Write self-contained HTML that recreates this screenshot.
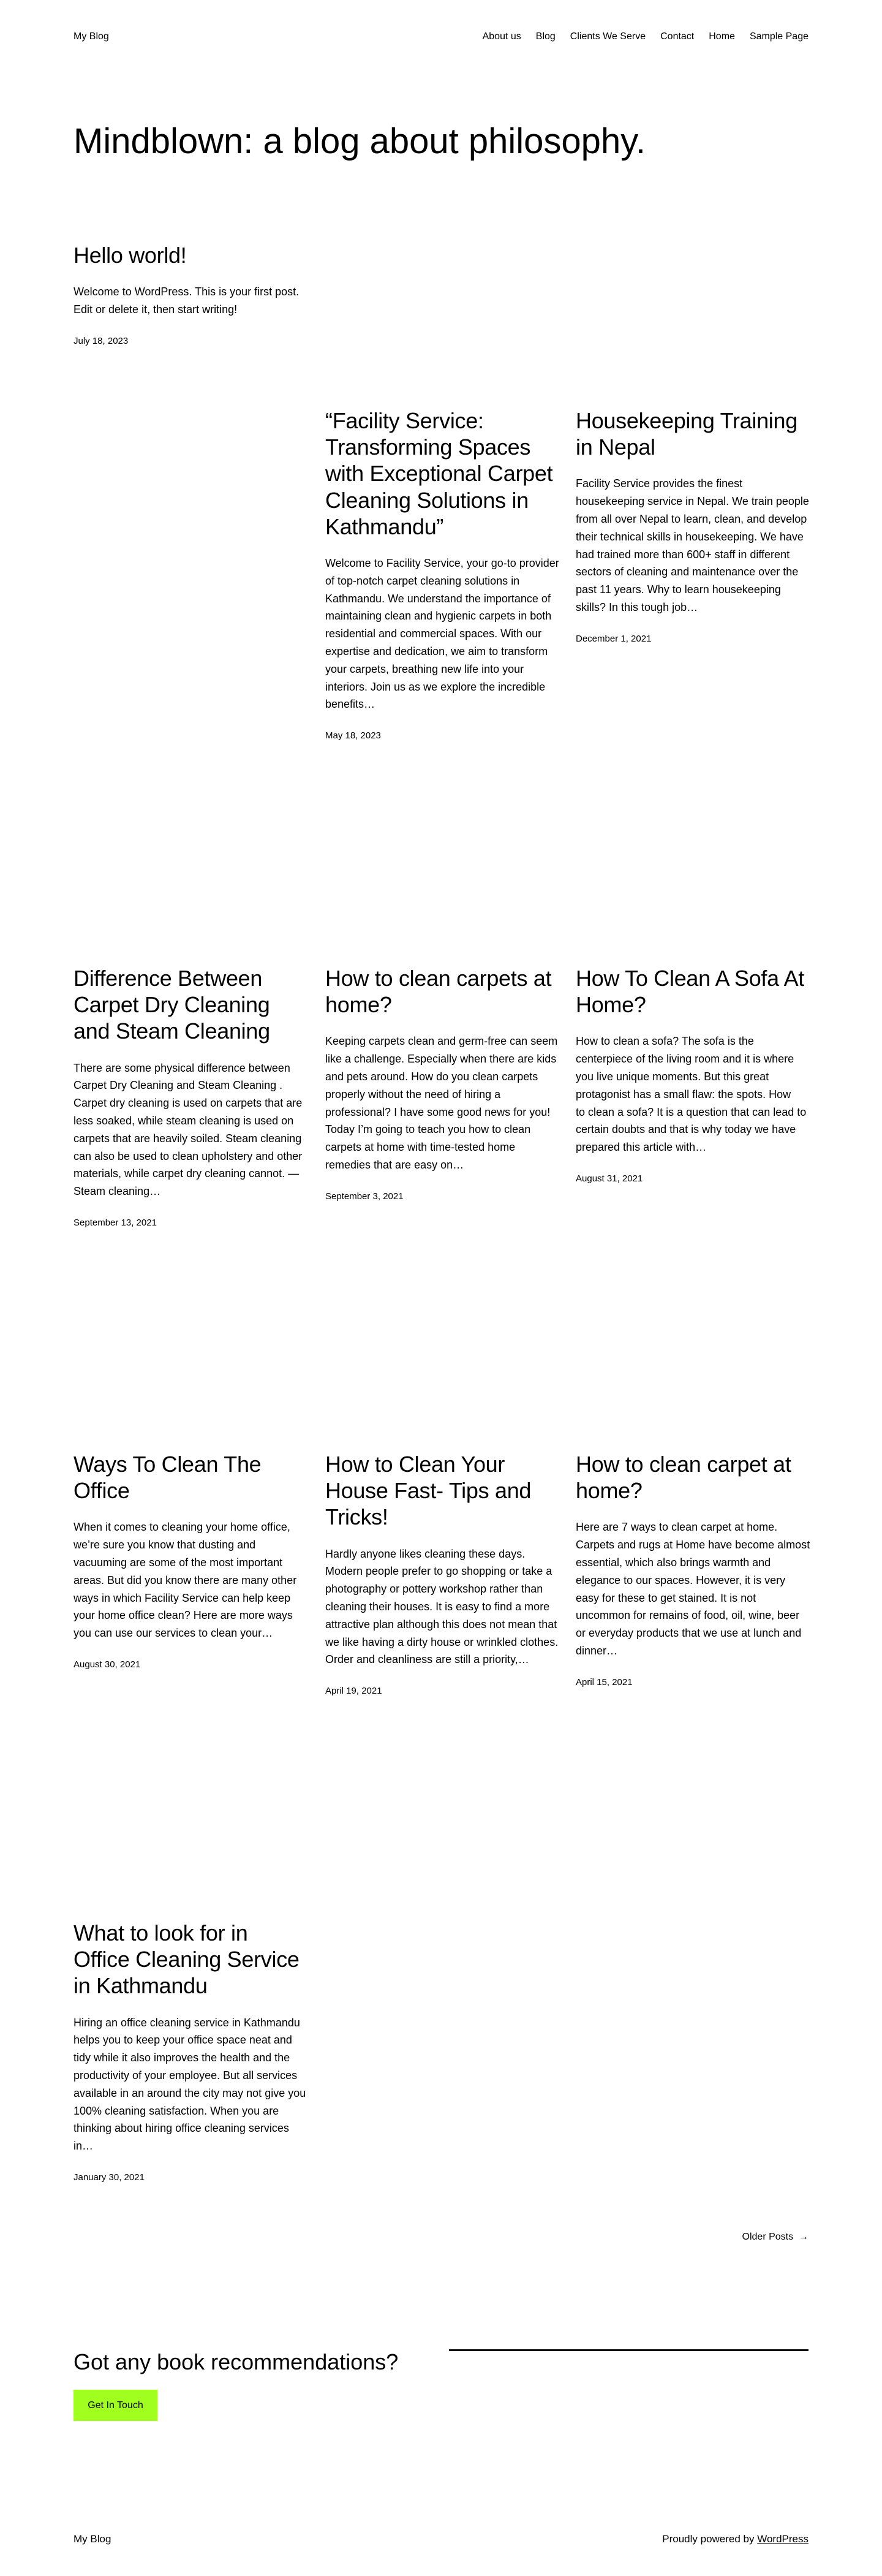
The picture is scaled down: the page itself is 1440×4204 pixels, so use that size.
<!DOCTYPE html>
<html><head><meta charset="utf-8"><style>
*{margin:0;padding:0;box-sizing:border-box}
body{width:1440px;height:4204px;position:relative;background:#fff;color:#000;font-family:"Liberation Sans",Arial,sans-serif;overflow:hidden}
.a{position:absolute}
.nav{top:49px;font-size:16px;line-height:22px}
.nav span{margin-left:24px}
h1{font-weight:400;font-size:58px;line-height:70px}
.art{position:absolute;width:420px;white-space:nowrap}
.art h2{font-weight:400;font-size:36px;line-height:43.2px;letter-spacing:-0.3px}
.art p{font-size:18px;line-height:28.8px;margin-top:24px}
.art .d{font-size:15px;line-height:22px;margin-top:26px}
</style></head><body>
<div class="a nav" style="left:120px">My Blog</div>
<div class="a nav" style="right:120px"><span>About us</span><span>Blog</span><span>Clients We Serve</span><span>Contact</span><span>Home</span><span>Sample Page</span></div>
<h1 class="a" style="left:120px;top:196px">Mindblown: a blog about philosophy.</h1>

<div class="art" style="left:120px;top:395px"><h2>Hello world!</h2><p>Welcome to WordPress. This is your first post.<br>Edit or delete it, then start writing!</p><div class="d">July 18, 2023</div></div>

<div class="art" style="left:531px;top:665px"><h2>“Facility Service:<br>Transforming Spaces<br>with Exceptional Carpet<br>Cleaning Solutions in<br>Kathmandu”</h2><p>Welcome to Facility Service, your go-to provider<br>of top-notch carpet cleaning solutions in<br>Kathmandu. We understand the importance of<br>maintaining clean and hygienic carpets in both<br>residential and commercial spaces. With our<br>expertise and dedication, we aim to transform<br>your carpets, breathing new life into your<br>interiors. Join us as we explore the incredible<br>benefits…</p><div class="d">May 18, 2023</div></div>
<div class="art" style="left:940px;top:665px"><h2>Housekeeping Training<br>in Nepal</h2><p>Facility Service provides the finest<br>housekeeping service in Nepal. We train people<br>from all over Nepal to learn, clean, and develop<br>their technical skills in housekeeping. We have<br>had trained more than 600+ staff in different<br>sectors of cleaning and maintenance over the<br>past 11 years. Why to learn housekeeping<br>skills? In this tough job…</p><div class="d">December 1, 2021</div></div>

<div class="art" style="left:120px;top:1575px"><h2>Difference Between<br>Carpet Dry Cleaning<br>and Steam Cleaning</h2><p>There are some physical difference between<br>Carpet Dry Cleaning and Steam Cleaning .<br>Carpet dry cleaning is used on carpets that are<br>less soaked, while steam cleaning is used on<br>carpets that are heavily soiled. Steam cleaning<br>can also be used to clean upholstery and other<br>materials, while carpet dry cleaning cannot. —<br>Steam cleaning…</p><div class="d">September 13, 2021</div></div>
<div class="art" style="left:531px;top:1575px"><h2>How to clean carpets at<br>home?</h2><p>Keeping carpets clean and germ-free can seem<br>like a challenge. Especially when there are kids<br>and pets around. How do you clean carpets<br>properly without the need of hiring a<br>professional? I have some good news for you!<br>Today I’m going to teach you how to clean<br>carpets at home with time-tested home<br>remedies that are easy on…</p><div class="d">September 3, 2021</div></div>
<div class="art" style="left:940px;top:1575px"><h2>How To Clean A Sofa At<br>Home?</h2><p>How to clean a sofa? The sofa is the<br>centerpiece of the living room and it is where<br>you live unique moments. But this great<br>protagonist has a small flaw: the spots. How<br>to clean a sofa? It is a question that can lead to<br>certain doubts and that is why today we have<br>prepared this article with…</p><div class="d">August 31, 2021</div></div>

<div class="art" style="left:120px;top:2368px"><h2>Ways To Clean The<br>Office</h2><p>When it comes to cleaning your home office,<br>we’re sure you know that dusting and<br>vacuuming are some of the most important<br>areas. But did you know there are many other<br>ways in which Facility Service can help keep<br>your home office clean? Here are more ways<br>you can use our services to clean your…</p><div class="d">August 30, 2021</div></div>
<div class="art" style="left:531px;top:2368px"><h2>How to Clean Your<br>House Fast- Tips and<br>Tricks!</h2><p>Hardly anyone likes cleaning these days.<br>Modern people prefer to go shopping or take a<br>photography or pottery workshop rather than<br>cleaning their houses. It is easy to find a more<br>attractive plan although this does not mean that<br>we like having a dirty house or wrinkled clothes.<br>Order and cleanliness are still a priority,…</p><div class="d">April 19, 2021</div></div>
<div class="art" style="left:940px;top:2368px"><h2>How to clean carpet at<br>home?</h2><p>Here are 7 ways to clean carpet at home.<br>Carpets and rugs at Home have become almost<br>essential, which also brings warmth and<br>elegance to our spaces. However, it is very<br>easy for these to get stained. It is not<br>uncommon for remains of food, oil, wine, beer<br>or everyday products that we use at lunch and<br>dinner…</p><div class="d">April 15, 2021</div></div>

<div class="art" style="left:120px;top:3133px"><h2>What to look for in<br>Office Cleaning Service<br>in Kathmandu</h2><p>Hiring an office cleaning service in Kathmandu<br>helps you to keep your office space neat and<br>tidy while it also improves the health and the<br>productivity of your employee. But all services<br>available in an around the city may not give you<br>100% cleaning satisfaction. When you are<br>thinking about hiring office cleaning services<br>in…</p><div class="d">January 30, 2021</div></div>

<div class="a" style="right:120px;top:3641px;font-size:16px;line-height:20px">Older Posts &nbsp;→</div>
<div class="a" style="left:733px;width:587px;top:3834px;height:3px;background:#000"></div>
<div class="a" style="left:120px;top:3833px;font-size:36px;line-height:43px">Got any book recommendations?</div>
<div class="a" style="left:120px;top:3900px;width:137px;height:51px;background:#a0ff1f;font-size:16px;line-height:51px;text-align:center">Get In Touch</div>
<div class="a" style="left:120px;top:4133px;font-size:17px;line-height:22px">My Blog</div>
<div class="a" style="right:120px;top:4133px;font-size:17px;line-height:22px">Proudly powered by <span style="text-decoration:underline">WordPress</span></div>
</body></html>
